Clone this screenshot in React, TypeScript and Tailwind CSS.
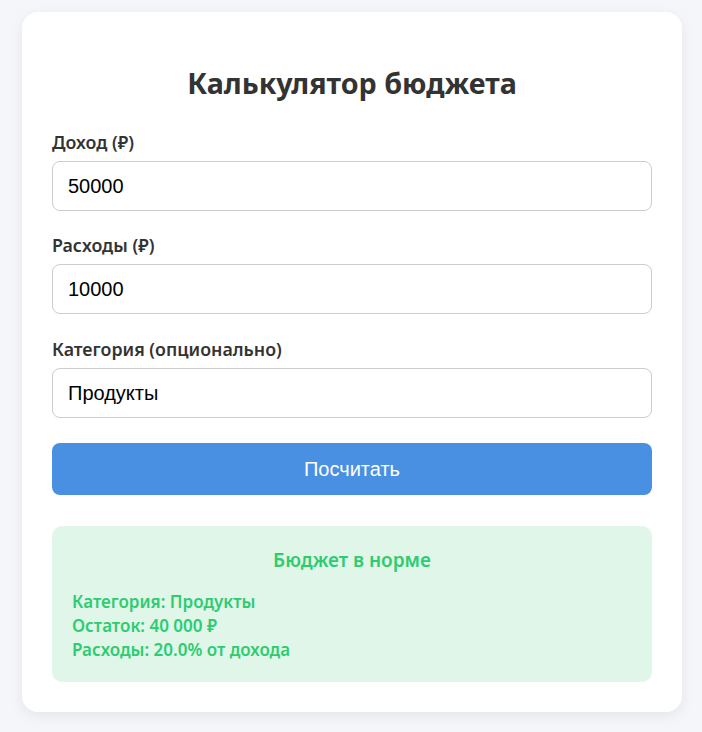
import React from "react";

const ui = { fontFamily: '"Noto Sans", "Open Sans", sans-serif' };
const arial = { fontFamily: '"Liberation Sans", Arial, sans-serif' };

function Field({ label, value, className = "" }: { label: string; value: string; className?: string }) {
  return (
    <div className={"flex flex-col " + className}>
      <label className="text-[17.8px] leading-[22px] font-semibold text-[#333] mb-[8px]" style={ui}>
        {label}
      </label>
      <input
        readOnly
        value={value}
        className="h-[50px] w-full rounded-[8px] border border-[#cccccc] bg-white px-[15px] text-[20px] text-black outline-none"
        style={arial}
      />
    </div>
  );
}

export default function App() {
  return (
    <div className="min-h-screen bg-[#f4f6f9] pt-[12px] pl-[22px] flex" style={ui}>
      <div className="w-[660px] h-[700px] bg-white rounded-[16px] shadow-[0_4px_14px_rgba(0,0,0,0.07)] px-[30px] pt-[30px] pb-[30px]">
        <h2 className="mt-[22px] h-[38px] text-center text-[28.7px] leading-[38px] font-bold text-[#333]">
          Калькулятор бюджета
        </h2>
        <div className="mt-[29px] flex flex-col">
          <Field label="Доход (₽)" value="50000" />
          <Field label="Расходы (₽)" value="10000" className="mt-[23px]" />
          <Field label="Категория (опционально)" value="Продукты" className="mt-[24px]" />
        </div>
        <button
          className="mt-[25px] h-[52px] w-full rounded-[8px] bg-[#4a90e2] text-white text-[20px]"
          style={arial}
        >
          Посчитать
        </button>
        <div className="mt-[31px] rounded-[10px] bg-[#e0f6e9] p-[20px] text-[#2ecc71] font-semibold">
          <div className="text-center text-[19px] leading-[28px]">Бюджет в норме</div>
          <div className="mt-[16px] text-[17px] leading-[24px]">
            <div>Категория: Продукты</div>
            <div>Остаток: 40 000 ₽</div>
            <div>Расходы: 20.0% от дохода</div>
          </div>
        </div>
      </div>
    </div>
  );
}
